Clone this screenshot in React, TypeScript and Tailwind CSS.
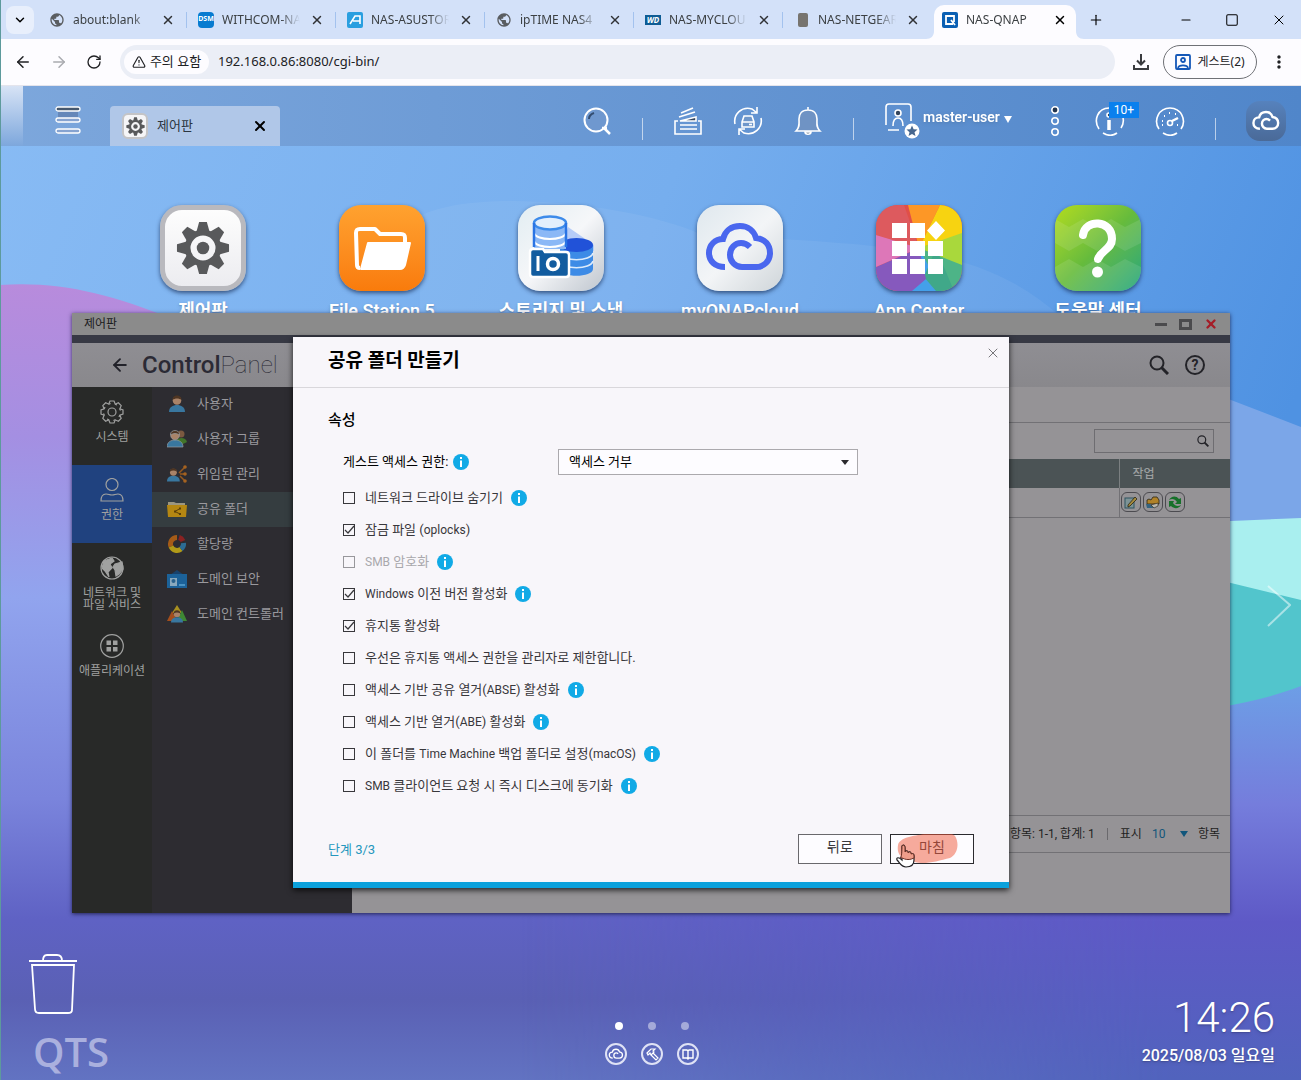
import { useState } from "react";
import type { ReactNode } from "react";
import { ArrowLeft, ArrowRight, ChevronDown, Minus, Plus, RotateCw, Square, TriangleAlert, X } from "lucide-react";
import { MdMoreVert, MdPublic } from "react-icons/md";

const CLOUD =
  "M28 62C18 62 12 56 12 48C12 40 18 34 26 34C28 26 34 21 43 21C51 21 57 26 59 33C68 34 73 40 73 48C73 56 67 62 59 62H45C38 62 33 56 33 50C33 43 38 38 44 38C48 38 50 39 53 42";

const Cloud = ({ className, width }: { className: string; width: number }) => (
  <svg viewBox="6 6 74 74" className={className} fill="none" stroke="currentColor" strokeWidth={width}>
    <path d={CLOUD} />
  </svg>
);

const Gear = ({ className }: { className: string }) => (
  <svg viewBox="-28 -28 56 56" className={className} fill="currentColor">
    {[0, 45, 90, 135, 180, 225, 270, 315].map((a) => (
      <path key={a} d="M-7-16L-4-27H4L7-16Z" transform={`rotate(${a})`} />
    ))}
    <path fillRule="evenodd" d="M0-19a19 19 0 1 0 0 38a19 19 0 1 0 0-38ZM0-13a13 13 0 1 1 0 26a13 13 0 1 1 0-26Z" />
    <circle r="6.500" />
  </svg>
);

/* ---------- browser chrome ---------- */

const browserTabs: { title: string; icon: ReactNode }[] = [
  { title: "about:blank", icon: <MdPublic className="size-4 text-[#5a5d61]" /> },
  {
    title: "WITHCOM-NA",
    icon: <span className="flex size-4 items-center justify-center rounded-sm bg-[#087bd0] text-[7px] font-bold text-white">DSM</span>,
  },
  {
    title: "NAS-ASUSTOR",
    icon: (
      <svg viewBox="0 0 16 16" className="size-4">
        <rect width="16" height="16" rx="2" fill="#2a9fe0" />
        <path d="M3 12L8 4H13V12M6 9H13" fill="none" stroke="#fff" strokeWidth="1.600" />
      </svg>
    ),
  },
  { title: "ipTIME NAS4", icon: <MdPublic className="size-4 text-[#5a5d61]" /> },
  {
    title: "NAS-MYCLOU",
    icon: <span className="flex h-[10px] w-4 items-center justify-center bg-[#0e5c94] text-[8px] font-bold text-white italic">WD</span>,
  },
  { title: "NAS-NETGEAR", icon: <span className="ml-1 h-[14px] w-[10px] rounded-xs bg-[#77746f]" /> },
];

const TabTitle = ({ children }: { children: string }) => (
  <span className="ml-2 w-[78px] shrink-0 mask-r-from-75% text-xs whitespace-nowrap text-[#3c4043]">{children}</span>
);

const BrowserTabs = () => (
  <div className="flex h-[39px] items-center bg-[#d3e1f9] pr-1 font-['Noto_Sans','Noto_Sans_CJK_KR',sans-serif]">
    <button aria-label="Search tabs" className="ml-[6px] flex size-7 shrink-0 items-center justify-center rounded-lg bg-[#e8effc]">
      <ChevronDown className="size-[14px]" strokeWidth={2.5} />
    </button>
    <div className="ml-1 flex min-w-0">
      {browserTabs.map((tab, i) => (
        <div key={tab.title} className="flex w-[149px] items-center pl-[11px]">
          <span className="flex w-4 shrink-0">{tab.icon}</span>
          <TabTitle>{tab.title}</TabTitle>
          <button aria-label={`Close ${tab.title}`} className="ml-[10px]">
            <X className="size-[14px] text-[#303236]" strokeWidth={2.5} />
          </button>
          {i < 5 && <span className="ml-auto h-4 w-px bg-[#a3c2ee]" />}
        </div>
      ))}
    </div>
    <svg viewBox="0 0 8 8" className="-ml-[6px] size-2 shrink-0 self-end" fill="#fdfcff">
      <path d="M8 0V8H0C5 8 8 5 8 0Z" />
    </svg>
    <div className="mt-[5px] flex h-[34px] w-[142px] shrink-0 items-center rounded-t-[10px] bg-[#fdfcff] pb-1 pl-2">
      <svg viewBox="0 0 16 16" className="size-4 shrink-0">
        <rect width="16" height="16" rx="2" fill="#0b60b4" />
        <path d="M11 12H4V4H12V10M9 8L13 13" fill="none" stroke="#fff" strokeWidth="1.800" />
      </svg>
      <TabTitle>NAS-QNAP</TabTitle>
      <button aria-label="Close NAS-QNAP" className="ml-[9px]">
        <X className="size-[14px]" strokeWidth={2.5} />
      </button>
    </div>
    <svg viewBox="0 0 8 8" className="size-2 shrink-0 self-end" fill="#fdfcff">
      <path d="M0 0V8H8C3 8 0 5 0 0Z" />
    </svg>
    <button aria-label="New tab" className="ml-1">
      <Plus className="size-4" strokeWidth={1.75} />
    </button>
    <div className="ml-auto flex items-center gap-8 pr-[10px]">
      <button aria-label="Minimize">
        <Minus className="size-[14px]" strokeWidth={1.75} />
      </button>
      <button aria-label="Maximize">
        <Square className="size-[14px]" strokeWidth={1.75} />
      </button>
      <button aria-label="Close">
        <X className="size-4" strokeWidth={1.5} />
      </button>
    </div>
  </div>
);

const AddressBar = () => (
  <div className="flex h-[47px] items-center border-b border-[#e4e4ec] bg-[#fdfcff] pr-3 pl-[14px] font-['Noto_Sans','Noto_Sans_CJK_KR',sans-serif] text-[#202124]">
    <button aria-label="Back" className="mr-[18px]">
      <ArrowLeft className="size-[18px]" />
    </button>
    <button aria-label="Forward" className="mr-[18px]">
      <ArrowRight className="size-[18px] text-[#a9abb0]" />
    </button>
    <button aria-label="Reload" className="mr-[18px]">
      <RotateCw className="size-4" />
    </button>
    <div className="flex h-[34px] flex-1 items-center rounded-full bg-[#ebeef6] pl-1">
      <button className="flex h-6 w-[85px] shrink-0 items-center justify-center gap-1 rounded-full bg-[#fdfcff] text-[13px]">
        <TriangleAlert className="size-[14px]" />
        주의 요함
      </button>
      <input
        aria-label="Address"
        defaultValue="192.168.0.86:8080/cgi-bin/"
        className="ml-[9px] min-w-0 flex-1 bg-transparent text-[13px] outline-none"
      />
    </div>
    <button aria-label="Downloads" className="mr-3 ml-4">
      <svg viewBox="0 0 20 20" className="size-5" fill="none" stroke="#3a3b3f" strokeWidth="2">
        <path d="M10 2V12M6 8.500L10 12.500L14 8.500M3 13V17H17V13" />
      </svg>
    </button>
    <button className="flex h-[34px] w-[94px] items-center justify-center gap-[6px] rounded-full border border-[#6f7176] text-xs">
      <svg viewBox="0 0 16 16" className="size-4" fill="none" stroke="#1558b8" strokeWidth="1.800">
        <rect x="1" y="1" width="14" height="14" rx="1" />
        <circle cx="8" cy="6" r="2" />
        <path d="M3 14C4 10.500 12 10.500 13 14" />
      </svg>
      게스트(2)
    </button>
    <button aria-label="Menu" className="ml-3">
      <MdMoreVert className="size-5" />
    </button>
  </div>
);

/* ---------- QTS desktop ---------- */

const Wallpaper = () => (
  <svg viewBox="0 0 1301 994" preserveAspectRatio="none" className="absolute inset-0 h-full w-full">
    <defs>
      <linearGradient id="sky" x1="0" y1="0" x2="1" y2="0.300">
        <stop offset="0" stopColor="#88bbf4" />
        <stop offset="0.500" stopColor="#76aeee" />
        <stop offset="1" stopColor="#4f92e2" />
      </linearGradient>
      <linearGradient id="violet" x1="0" y1="190" x2="0" y2="994" gradientUnits="userSpaceOnUse">
        <stop offset="0" stopColor="#b98bdc" />
        <stop offset="0.200" stopColor="#a48fe2" />
        <stop offset="0.400" stopColor="#91a4ee" />
        <stop offset="0.650" stopColor="#7a84dc" />
        <stop offset="0.800" stopColor="#5f62c4" />
        <stop offset="0.900" stopColor="#5a60b4" />
        <stop offset="1" stopColor="#6273c2" />
      </linearGradient>
      <linearGradient id="dusk" x1="0" y1="600" x2="0" y2="994" gradientUnits="userSpaceOnUse">
        <stop offset="0" stopColor="#6d9ee6" />
        <stop offset="0.300" stopColor="#757ddc" />
        <stop offset="0.600" stopColor="#5e59c6" />
        <stop offset="1" stopColor="#5163bd" />
      </linearGradient>
      <linearGradient id="fade" x1="0" y1="0" x2="1" y2="0">
        <stop offset="0.400" stopColor="#fff" stopOpacity="0" />
        <stop offset="0.900" stopColor="#fff" />
      </linearGradient>
      <mask id="right">
        <rect width="1301" height="994" fill="url(#fade)" />
      </mask>
    </defs>
    <rect width="1301" height="994" fill="url(#sky)" />
    <path d="M420 130C480 100 640 120 700 148C900 160 980 160 1060 230H420Z" fill="#fff" opacity=".06" />
    <path d="M0 199C60 195 110 208 170 232L700 600H1301V994H0Z" fill="url(#violet)" />
    <path d="M1100 270L1231 314L1301 341V440H1100Z" fill="#7ba6e8" />
    <path d="M1100 440L1231 435L1301 432V540H1100Z" fill="#a9efef" />
    <path d="M1100 470L1231 497L1301 514V640H1100Z" fill="#52c5cc" />
    <path d="M800 640C1000 640 1200 640 1301 600V994H0V830H800Z" fill="url(#dusk)" mask="url(#right)" />
  </svg>
);

const Divider = () => <span className="mt-4 h-[22px] w-px shrink-0 bg-white/60" />;

const TrayButton = ({ label, children }: { label: string; children: ReactNode }) => (
  <button aria-label={label} className="relative shrink-0">
    <svg viewBox="0 0 30 30" className="size-[30px]" fill="none" stroke="#fff" strokeWidth="1.600">
      {children}
    </svg>
  </button>
);

const Taskbar = () => (
  <header className="relative flex h-[60px] items-center bg-linear-to-r from-[#7da7dc] to-[#5086ca] pr-[15px]">
    <span className="h-full w-[23px] shrink-0 bg-linear-to-b from-[#d7e3f5] to-[#7da7dc]" />
    <button aria-label="Main menu" className="ml-8 pt-2">
      <svg viewBox="0 0 26 28" className="h-7 w-[26px]" fill="#86a3d0" stroke="#fff" strokeWidth="1.300">
        <rect x="3" y="5" width="20" height="8" fill="#6587b9" stroke="none" />
        <rect x="1" y="1" width="24" height="4" rx="2" fill="#46586e" />
        <rect x="1" y="12" width="24" height="4" rx="2" />
        <rect x="1" y="23" width="24" height="4" rx="2" />
      </svg>
    </button>
    <div className="ml-[29px] flex h-10 w-[170px] items-center self-end rounded-t bg-[#b0c7e8] px-3">
      <span className="flex size-[26px] items-center justify-center rounded-md border-2 border-[#c4c4c6] bg-[#f5f5f7]">
        <Gear className="size-[19px] text-[#58595b]" />
      </span>
      <span className="ml-[9px] text-[13px] text-[#2c3640]">제어판</span>
      <button aria-label="제어판 닫기" className="ml-auto">
        <X className="size-4" strokeWidth={3} />
      </button>
    </div>
    <div className="ml-auto flex items-center gap-[30px] pt-[10px]">
      <TrayButton label="검색">
        <circle cx="14" cy="14" r="11.500" strokeWidth="2" fill="#6f98cf" />
        <path d="M20 22H25M22 22L28 28" strokeWidth="2.500" />
        <path d="M7 13C7 10 9 8 12 7" stroke="#334d70" strokeWidth="2" />
      </TrayButton>
      <Divider />
      <TrayButton label="백그라운드 작업">
        <path d="M5 15H2V28H28V15H25M7 19H24M7 23H24" />
        <path d="M7 15L23 11V15Z" fill="#33445c" />
        <path d="M6 11L22 6M8 7L20 2" />
      </TrayButton>
      <TrayButton label="외부 장치">
        <path d="M2 18C0 8 9 0 19 3L24 7M28 12C30 22 21 30 11 27L6 23M24 1V7H18M6 29V23H12" />
        <path d="M9 16L11 10H19L21 16V21H9ZM9 16H21" fill="#6f97ca" />
        <path d="M16 18.500H19" />
      </TrayButton>
      <TrayButton label="알림">
        <path d="M3 25H27C23 21 24 18 24 13C24 8 21 4 15 4C9 4 6 8 6 13C6 18 7 21 3 25ZM15 1V4" fill="#6f93c4" />
        <path d="M12 26C12 29 18 29 18 26Z" fill="#33445c" />
      </TrayButton>
      <Divider />
      <button className="flex w-[131px] shrink-0 items-center text-[14px] font-semibold text-white">
        <svg viewBox="0 0 36 36" className="h-9 w-9" fill="none" stroke="#fff" strokeWidth="1.600">
          <path d="M2 22V4C2 2 3 1 5 1H24C26 1 27 2 27 4V18M4 27H15" />
          <circle cx="14" cy="10" r="3" fill="#33445c" />
          <path d="M9 23C9 17 11 15 14 15C17 15 19 17 19 23" />
          <circle cx="28" cy="28" r="7.500" fill="#fff" stroke="none" />
          <path d="M28 22.500L29.600 26.300L33.500 26.600L30.500 29.200L31.500 33L28 31L24.500 33L25.500 29.200L22.500 26.600L26.400 26.300Z" fill="#47678f" stroke="none" />
        </svg>
        <span className="ml-[3px] pb-2 drop-shadow">master-user</span>
        <svg viewBox="0 0 8 7" className="mb-1 ml-1 h-[7px] w-2" fill="#fff">
          <path d="M0 0H8L4 7Z" />
        </svg>
      </button>
      <button aria-label="더 보기" className="mx-[5px] shrink-0">
        <svg viewBox="0 0 10 30" className="h-[30px] w-[10px]" fill="none" stroke="#fff" strokeWidth="1.600">
          <circle cx="5" cy="4" r="3.200" fill="#22354f" />
          <circle cx="5" cy="15" r="3.200" />
          <circle cx="5" cy="26" r="3.200" />
        </svg>
      </button>
      <div className="relative flex">
        <TrayButton label="정보">
          <path d="M4 23C-2 14 3 2 14 2M8 27C13 30 18 30 22 27M26 22C28 19 29 16 28 12" />
          <circle cx="14" cy="9" r="2" fill="#33445c" />
          <path d="M14 14V24" strokeWidth="3.500" />
        </TrayButton>
        <span className="absolute -top-[4px] left-[14px] h-4 w-[30px] bg-[#0a80ee] text-center text-xs leading-4 text-white">10+</span>
      </div>
      <TrayButton label="리소스 모니터">
        <path d="M4 23C-2 14 4 2 15 2S32 14 26 23M8 27C13 30 18 30 22 27" />
        <path d="M7 15H8M9 10H10M14 7H15M20 8H21M22 19H23M7 19H8" strokeWidth="2" />
        <circle cx="15" cy="17" r="2.500" />
        <path d="M17 15L23 12" strokeWidth="2.500" />
      </TrayButton>
      <Divider />
      <button aria-label="myQNAPcloud" className="flex size-10 shrink-0 items-center justify-center rounded-[14px] bg-linear-to-b from-[#5682bd] to-[#4a6a98] text-white">
        <Cloud className="size-[30px]" width={6} />
      </button>
    </div>
  </header>
);

const tile = "flex size-[86px] items-center justify-center overflow-hidden rounded-[22px] shadow-[0_2px_4px_rgba(20,40,80,0.7)]";

const desktopApps: { name: string; icon: ReactNode }[] = [
  {
    name: "제어판",
    icon: (
      <span className={`${tile} border-[5px] border-[#b9b9be] bg-linear-to-b from-[#fdfdfd] to-[#ececf0]`}>
        <Gear className="size-[54px] text-[#58595b]" />
      </span>
    ),
  },
  {
    name: "File Station 5",
    icon: (
      <span className={`${tile} bg-linear-to-b from-[#ffa22f] to-[#f97b0b]`}>
        <svg viewBox="0 0 86 86" className="size-[86px]" fill="none" stroke="#fff" strokeWidth="4" strokeLinejoin="round">
          <path d="M21 63C19 63 18 62 18 60L17 28C17 25 18 24 21 24H36L41 29H62C65 29 66 30 66 33V37" />
          <path d="M29 38H71L66 60C65 63 64 64 61 64H22Z" fill="#fff" strokeWidth="2" />
        </svg>
      </span>
    ),
  },
  {
    name: "스토리지 및 스냅",
    icon: (
      <span className={`${tile} bg-linear-to-br from-[#e2edf2] via-[#f6f7f9] to-[#bfc6ce]`}>
        <svg viewBox="0 0 86 86" className="size-[86px]">
          <path d="M50 22L76 40V46H42Z" fill="#b6ccf8" />
          <path d="M42 40V64C42 73 75 73 75 64V40Z" fill="#3d8be6" />
          <ellipse cx="58.500" cy="40" rx="16.500" ry="7" fill="#2152d8" />
          <path d="M42 48C44 57 73 57 75 48M42 56C44 65 73 65 75 56" fill="none" stroke="#dcebfb" strokeWidth="1.600" />
          <path d="M16 18V44H48V18Z" fill="#8bb8f6" />
          <path d="M16 28C18 36 46 36 48 28M16 36C18 44 46 44 48 36" fill="none" stroke="#fff" strokeWidth="2" />
          <ellipse cx="32" cy="18" rx="16" ry="6.500" fill="#e3effc" stroke="#3d8bea" strokeWidth="2.500" />
          <path d="M16 18V42M48 18V42" stroke="#2a74e4" strokeWidth="2.500" />
          <path d="M12 47C12 45 13 44 15 44H25L27 47H48C50 47 51 48 51 50V69C51 71 50 72 48 72H15C13 72 12 71 12 69Z" fill="#125c9f" stroke="#fff" strokeWidth="2.500" />
          <path d="M20 51V66" stroke="#fff" strokeWidth="3" />
          <circle cx="35" cy="59" r="5.500" fill="none" stroke="#fff" strokeWidth="3.500" />
        </svg>
      </span>
    ),
  },
  {
    name: "myQNAPcloud",
    icon: (
      <span className={`${tile} bg-linear-to-br from-[#dfe8ee] via-[#f3f5f7] to-[#cfd5d9] text-[#4a67ee]`}>
        <Cloud className="size-[74px]" width={6} />
      </span>
    ),
  },
  {
    name: "App Center",
    icon: (
      <span className={tile}>
        <svg viewBox="0 0 86 86" className="size-[86px]">
          <rect width="86" height="86" fill="#e04f48" />
          <path d="M0 0H28L43 43L0 30Z" fill="#dd5a5e" />
          <path d="M32 0H64L43 43Z" fill="#fd9726" />
          <path d="M64 0H86V30L43 43Z" fill="#f7d311" />
          <path d="M86 28V62L43 43Z" fill="#a9d83c" />
          <path d="M86 60V86H60L43 43Z" fill="#4db487" />
          <path d="M66 86H34L43 43Z" fill="#44a0ea" />
          <path d="M48 72L60 86H78L60 43Z" fill="#40a889" />
          <path d="M0 62L43 43L50 74L36 86H0Z" fill="#8659bd" />
          <path d="M0 30L43 43L0 62Z" fill="#dd77b8" />
          <path
            d="M16 18h15v15H16zM34 18h15v15H34zM16 36h15v15H16zM34 36h15v15H34zM52 36h15v15H52zM16 54h15v15H16zM34 54h15v15H34zM52 54h15v15H52zM60 16L69 25.500L60 35L51 25.500Z"
            fill="#fff"
          />
        </svg>
      </span>
    ),
  },
  {
    name: "도움말 센터",
    icon: (
      <span className={`${tile} bg-linear-to-br from-[#b2dc18] via-[#66bb3c] to-[#1ba67a]`}>
        <svg viewBox="0 0 86 86" className="size-[86px]">
          <path d="M0 14L14 22L28 14L42 22L56 14L70 22L86 14V38L70 46L56 38L42 46L28 38L14 46L0 38Z" fill="#fff" opacity=".1" />
          <path d="M0 62L14 54L28 62L42 54L56 62L70 54L86 62V86H0Z" fill="#fff" opacity=".1" />
          <path d="M28 30C30 14 57 14 57 34C57 44 46 45 43 54" fill="none" stroke="#fff" strokeWidth="8" strokeLinecap="round" />
          <circle cx="42.500" cy="67" r="5.500" fill="#fff" />
        </svg>
      </span>
    ),
  },
];

const DesktopIcons = () => (
  <div className="relative mx-auto grid w-full max-w-[1074px] grid-cols-6 pt-[59px]">
    {desktopApps.map((app) => (
      <button key={app.name} className="flex flex-col items-center gap-[6px] text-lg font-semibold whitespace-nowrap text-white">
        {app.icon}
        <span className="text-shadow-md">{app.name}</span>
      </button>
    ))}
  </div>
);

const sections: { name: string; icon: ReactNode }[] = [
  {
    name: "시스템",
    icon: (
      <>
        {[0, 45, 90, 135, 180, 225, 270, 315].map((a) => (
          <path key={a} d="M8.700 4.300L10 1H14L15.300 4.300L17 5" transform={`rotate(${a} 12 12)`} />
        ))}
        <circle cx="12" cy="12" r="4" />
      </>
    ),
  },
  {
    name: "권한",
    icon: (
      <>
        <circle cx="12" cy="6.500" r="6" />
        <path d="M1 23C1 18 3 16 6 16C9 16 9 17 12 17C15 17 15 16 18 16C21 16 23 18 23 23Z" />
      </>
    ),
  },
  {
    name: "네트워크 및 파일 서비스",
    icon: (
      <>
        <circle cx="12" cy="12" r="11" />
        <path d="M4 5L12 2L14 5L10 8L12 12L8 16L9 21L5 15L2 12ZM15 8L22 6L23 13L19 18L16 20L15 14L13 11Z" fill="currentColor" />
      </>
    ),
  },
  {
    name: "애플리케이션",
    icon: (
      <>
        <circle cx="12" cy="12" r="11.300" />
        <path d="M6.500 6.500h4.500v4.500H6.500zM13 6.500h4.500v4.500H13zM6.500 13h4.500v4.500H6.500zM13 13h4.500v4.500H13z" fill="currentColor" stroke="none" />
      </>
    ),
  },
];

const Person = ({ x = 0 }: { x?: number }) => (
  <g transform={`translate(${x} 0)`}>
    <path d="M0 18C0 13 4 11 8 11S16 13 16 18Z" fill="#39779f" />
    <circle cx="8" cy="6.500" r="4.300" fill="#a98368" />
    <path d="M3.500 6C3 0 13 0 12.500 6C10 4 6 4 3.500 6Z" fill="#4e3522" />
  </g>
);

const menuItems: { name: string; icon: ReactNode }[] = [
  { name: "사용자", icon: <Person x={2} /> },
  {
    name: "사용자 그룹",
    icon: (
      <>
        <path d="M9 12C11 8 19 8 20 13L16 15Z" fill="#42752a" />
        <circle cx="14" cy="5" r="3.500" fill="#7b5940" />
        <g stroke="#969ca0" strokeWidth=".7">
          <Person />
        </g>
      </>
    ),
  },
  {
    name: "위임된 관리",
    icon: (
      <>
        <g transform="translate(0 3) scale(.800)">
          <Person />
        </g>
        <path d="M12 9L18 3M13 10H18M13 12L18 17" stroke="#96591e" strokeWidth="1.500" />
        <circle cx="18" cy="3" r="1.800" fill="#a56220" />
        <circle cx="18" cy="10" r="1.800" fill="#a56220" />
        <circle cx="18" cy="17" r="1.800" fill="#a56220" />
      </>
    ),
  },
  {
    name: "공유 폴더",
    icon: (
      <>
        <path d="M1 3H7L9 4H18V9H1Z" fill="#9c9680" />
        <path d="M0 6H20L19 18H1Z" fill="#b58712" />
        <path d="M13 9.500L8 12.500L13 15" stroke="#5b3f08" fill="none" />
        <path d="M12 8.500h2v2h-2zM7 11.500h2v2H7zM12 14h2v2h-2z" fill="#5b3f08" />
      </>
    ),
  },
  {
    name: "할당량",
    icon: (
      <g fill="none" strokeWidth="5">
        <path d="M10 3.500A6.500 6.500 0 0 0 4 12.500" stroke="#a55b17" />
        <path d="M4 12.500A6.500 6.500 0 0 0 14 15" stroke="#b19a18" />
        <path d="M14 15A6.500 6.500 0 0 0 16.500 9" stroke="#2c6c94" />
        <path d="M16 7A6.500 6.500 0 0 0 12 3.500" stroke="#8b2222" />
      </g>
    ),
  },
  {
    name: "도메인 보안",
    icon: (
      <>
        <path d="M3 6L10 1L17 6" fill="#19426b" />
        <rect y="5" width="20" height="14" fill="#1c6299" />
        <rect x="3" y="9" width="7" height="8" fill="#8aa9bd" />
        <circle cx="6.500" cy="12" r="2" fill="#2a628c" />
        <path d="M12 16H18" stroke="#4b93c2" strokeWidth="2" />
      </>
    ),
  },
  {
    name: "도메인 컨트롤러",
    icon: (
      <>
        <path d="M10 1L15 9H5Z" fill="#a89020" />
        <path d="M5 7L10 17H0Z" fill="#a34e1c" />
        <path d="M15 6L20 17H10Z" fill="#3e8834" />
        <g transform="translate(4 5) scale(.750)">
          <Person />
        </g>
      </>
    ),
  },
];

const SearchGlyph = ({ className }: { className: string }) => (
  <svg viewBox="0 0 20 20" className={className} fill="none" stroke="#232328" strokeWidth="2">
    <circle cx="8" cy="8" r="6.500" />
    <path d="M12.500 12.500L19 19" strokeWidth="3" />
  </svg>
);

const rowAction = "flex size-5 items-center justify-center rounded-md border border-[#4c4b50]";

const SharedFolders = () => (
  <section className="flex min-w-0 flex-1 flex-col bg-[#959396] text-xs text-[#1f1f22]">
    <div className="h-9 border-b border-[#727175]" />
    <div className="flex h-9 items-center justify-end pr-4">
      <label className="flex h-6 w-[120px] items-center border border-[#6e6d71] pr-1">
        <input aria-label="공유 폴더 검색" className="min-w-0 flex-1 bg-transparent px-1 outline-none" />
        <SearchGlyph className="size-3" />
      </label>
    </div>
    <table className="w-full table-fixed border-collapse text-left">
      <thead>
        <tr className="h-[29px] bg-[#4b5355] text-[#9c9fa0]">
          <th aria-label="폴더 이름" />
          <th className="w-[111px] border-l border-[#7b7f81] pl-[13px] font-medium">작업</th>
        </tr>
      </thead>
      <tbody>
        <tr className="h-[29px] border-b border-[#727175]">
          <td />
          <td className="border-l border-[#727175] pl-[1px]">
            <div className="flex gap-[2px]">
              <button aria-label="속성 편집" className={rowAction}>
                <svg viewBox="0 0 14 14" className="size-[14px]">
                  <rect x="1" y="3" width="9" height="10" fill="#7d9396" stroke="#2f5560" />
                  <path d="M4 10L11 2L13 4L6 11L4 12Z" fill="#a48a3c" stroke="#2a2414" strokeWidth=".8" />
                </svg>
              </button>
              <button aria-label="권한 편집" className={rowAction}>
                <svg viewBox="0 0 14 14" className="size-[14px]">
                  <path d="M1 5L3 4L5 5L7 2H11L13 5V9H1Z" fill="#b08228" stroke="#2a2414" strokeWidth=".8" />
                  <path d="M0 9H4L9 13H1Z" fill="#35627d" />
                  <path d="M5 10L12 8V11L8 13Z" fill="#b9b7ae" stroke="#2a2414" strokeWidth=".6" />
                </svg>
              </button>
              <button aria-label="새로 고침" className={rowAction}>
                <svg viewBox="0 0 14 14" className="size-[14px]" fill="#17702a">
                  <path d="M1 5C3 1 8 0 11 4L13 3V9H7L9 7C7 4 4 3 1 5Z" />
                  <path d="M13 10C11 14 6 14 3 11L1 12V6H6L5 8C7 11 10 12 13 10Z" />
                </svg>
              </button>
            </div>
          </td>
        </tr>
      </tbody>
    </table>
    <div className="mt-auto mb-[60px] flex h-[38px] items-center justify-end border-y border-[#727175] pr-[10px]">
      <span>항목: 1-1, 합계: 1</span>
      <span className="mx-3 h-3 w-px bg-[#6a696d]" />
      <label htmlFor="page-size">표시</label>
      <span className="ml-[10px] flex items-center text-[#11567b]">
        <select id="page-size" className="w-7 appearance-none bg-transparent outline-none">
          <option>10</option>
        </select>
        <svg viewBox="0 0 8 6" className="h-[6px] w-2" fill="currentColor">
          <path d="M0 0H8L4 6Z" />
        </svg>
      </span>
      <span className="ml-[10px]">항목</span>
    </div>
  </section>
);

/* ---------- create folder dialog ---------- */

const InfoDot = () => (
  <svg viewBox="0 0 16 16" className="size-4 shrink-0">
    <circle cx="8" cy="8" r="8" fill="#11aae6" />
    <path d="M7 3H9V5H7ZM7 6.500H9V13H7Z" fill="#fff" />
  </svg>
);

type Option = { label: string; checked?: boolean; disabled?: boolean; info?: boolean };

const folderOptions: Option[] = [
  { label: "네트워크 드라이브 숨기기", info: true },
  { label: "잠금 파일 (oplocks)", checked: true },
  { label: "SMB 암호화", disabled: true, info: true },
  { label: "Windows 이전 버전 활성화", checked: true, info: true },
  { label: "휴지통 활성화", checked: true },
  { label: "우선은 휴지통 액세스 권한을 관리자로 제한합니다." },
  { label: "액세스 기반 공유 열거(ABSE) 활성화", info: true },
  { label: "액세스 기반 열거(ABE) 활성화", info: true },
  { label: "이 폴더를 Time Machine 백업 폴더로 설정(macOS)", info: true },
  { label: "SMB 클라이언트 요청 시 즉시 디스크에 동기화", info: true },
];

// Latin words are set one step smaller than the Hangul around them
const MixedText = ({ text }: { text: string }) => (
  <span>
    {text.split(/([A-Za-z][A-Za-z ]*[A-Za-z])/).map((part, i) =>
      i % 2 ? (
        <span key={i} className="text-xs">
          {part}
        </span>
      ) : (
        part
      )
    )}
  </span>
);

const OptionRow = ({ option }: { option: Option }) => {
  const [checked, setChecked] = useState(!!option.checked);

  return (
    <li className="flex h-8 items-center gap-2">
      <label className={option.disabled ? "flex items-center gap-[10px] text-[#a9a8ac]" : "flex items-center gap-[10px]"}>
        <span className="grid">
          <input
            type="checkbox"
            checked={checked}
            disabled={option.disabled}
            onChange={(e) => setChecked(e.target.checked)}
            className="peer size-3 appearance-none border border-[#38373b] [grid-area:1/1] disabled:border-[#98979b]"
          />
          <svg
            viewBox="0 0 12 12"
            className="pointer-events-none size-3 opacity-0 [grid-area:1/1] peer-checked:opacity-100"
            fill="none"
            stroke="#38373b"
            strokeWidth="1.200"
          >
            <path d="M2 6L5 9L11 2" />
          </svg>
        </span>
        <MixedText text={option.label} />
      </label>
      {option.info && <InfoDot />}
    </li>
  );
};

const dialogButton = "h-[30px] w-[84px] border bg-[#fdfcff] pb-1 text-sm text-[#38373b]";

const CreateFolderDialog = () => (
  <div role="dialog" aria-label="공유 폴더 만들기" className="flex w-[716px] flex-col border-b-[6px] border-[#0ba1dc] bg-[#f8f6fa] shadow-[0_2px_6px_rgba(0,0,0,0.8)]">
    <div className="flex h-[51px] items-center justify-between border-b border-[#d9d7db] pr-2 pb-[2px] pl-[35px]">
      <h2 className="text-[19px] font-bold">공유 폴더 만들기</h2>
      <button aria-label="닫기" className="mb-4">
        <X className="size-4 text-[#77767a]" strokeWidth={1.5} />
      </button>
    </div>
    <div className="px-[35px] pt-[22px] text-[13px] text-[#38373b]">
      <h3 className="text-[15px] leading-5 font-medium text-black">속성</h3>
      <div className="mt-[19px] ml-[15px] flex h-[26px] items-center text-black">
        <label htmlFor="guest-access">게스트 액세스 권한:</label>
        <span className="ml-[5px]">
          <InfoDot />
        </span>
        <span className="mr-[116px] ml-auto flex w-[300px] items-center border border-[#aba9ad] bg-[#fdfcff] pr-2">
          <select id="guest-access" className="h-6 flex-1 appearance-none bg-transparent pl-[10px] outline-none">
            <option>액세스 거부</option>
            <option>읽기 전용</option>
            <option>읽기/쓰기</option>
          </select>
          <svg viewBox="0 0 8 5" className="h-[5px] w-2" fill="#2b2a2e">
            <path d="M0 0H8L4 5Z" />
          </svg>
        </span>
      </div>
      <ul className="mt-[7px] ml-[15px]">
        {folderOptions.map((option) => (
          <OptionRow key={option.label} option={option} />
        ))}
      </ul>
    </div>
    <div className="mt-8 flex items-center px-[35px] pb-[18px]">
      <span className="pt-[2px] text-[13px] text-[#2596bd]">단계 3/3</span>
      <button className={`${dialogButton} ml-auto border-[#69686c]`}>뒤로</button>
      <div className="relative ml-2">
        <button className={`${dialogButton} border-[#2b2a2e]`}>마침</button>
        <svg viewBox="0 0 84 36" className="pointer-events-none absolute top-0 left-0 h-9 w-[84px]">
          <path d="M8 11C10 3 24 2 34 0C48-1 60-3 65 2C70 10 67 21 60 24C48 27 34 31 25 28C16 25 6 24 8 11Z" fill="#f0583a" opacity=".5" />
          <path
            d="M12 12C14 10 15 12 15 14V18C17 16 18 17 18 19C20 17 21 18 21 20C23 19 24 20 24 22V26C24 31 21 33 16 33C11 33 10 29 7 26C6 23 9 23 12 26Z"
            fill="#fff"
            stroke="#1f1f22"
            strokeWidth="1.200"
          />
          <path d="M10 23C12 26 12 12 12 12C14 10 15 12 15 14V18C17 16 18 17 18 19C20 17 21 18 21 20C23 19 24 20 24 22V24C18 27 14 25 10 23Z" fill="#ef9d8a" stroke="#6b2d22" />
        </svg>
      </div>
    </div>
  </div>
);

const ControlPanelWindow = () => (
  <main className="absolute top-[227px] right-[71px] left-[72px] flex h-[600px] flex-col shadow-[0_1px_4px_rgba(20,20,60,0.8)]">
    <div className="flex h-[22px] items-center bg-[#8b8b8b] pr-3 pl-3 text-xs text-[#1b1b1d]">
      <span>제어판</span>
      <div className="ml-auto flex items-center gap-3 text-[#3b3b3d]">
        <button aria-label="최소화" className="h-[3px] w-3 bg-[#4b4b4d]" />
        <button aria-label="최대화" className="h-[11px] w-[13px] border-3 border-[#4b4b4d]" />
        <button aria-label="닫기">
          <X className="size-[14px] text-[#a51d27]" strokeWidth={4} />
        </button>
      </div>
    </div>
    <div className="h-2 bg-[#373944]" />
    <div className="flex h-11 items-center bg-linear-to-b from-[#8f8e93] to-[#89888c] pr-[25px] pl-[38px]">
      <button aria-label="뒤로">
        <ArrowLeft className="size-5 text-[#22222a]" strokeWidth={2.25} />
      </button>
      <h1 className="ml-3 text-2xl font-medium text-[#2b2a35]">
        Control<span className="font-thin">Panel</span>
      </h1>
      <button aria-label="검색" className="ml-auto">
        <SearchGlyph className="size-5" />
      </button>
      <button aria-label="도움말" className="ml-4 size-5 rounded-full border-2 border-[#232328] text-sm leading-4 font-bold text-[#232328]">
        ?
      </button>
    </div>
    <div className="flex flex-1">
      <nav className="w-20 bg-[#282928] text-xs text-[#a0a1a0]">
        {sections.map((s) => (
          <a
            key={s.name}
            href="#"
            className={
              s.name === "권한"
                ? "flex h-[78px] flex-col items-center bg-[#20427f] px-1 pt-[13px] text-center leading-3 break-keep"
                : "flex h-[78px] flex-col items-center px-1 pt-[13px] text-center leading-3 break-keep"
            }
          >
            <svg viewBox="0 0 24 24" className="mb-[7px] size-6 shrink-0" fill="none" stroke="currentColor" strokeWidth="1.200">
              {s.icon}
            </svg>
            <span className="w-[74px]">{s.name}</span>
          </a>
        ))}
      </nav>
      <nav className="w-[200px] bg-[#2d2c31] text-[13px] text-[#9a999e]">
        {menuItems.map((item) => (
          <a
            key={item.name}
            href="#"
            className={
              item.name === "공유 폴더"
                ? "flex h-[35px] items-center gap-[10px] bg-[#353d40] pb-[2px] pl-[15px]"
                : "flex h-[35px] items-center gap-[10px] pb-[2px] pl-[15px]"
            }
          >
            <svg viewBox="0 0 20 20" className="size-5">
              {item.icon}
            </svg>
            {item.name}
          </a>
        ))}
      </nav>
      <SharedFolders />
    </div>
    <div className="absolute inset-0 flex items-start justify-center pt-6">
      <CreateFolderDialog />
    </div>
  </main>
);

const DesktopFooter = () => (
  <footer className="relative mt-auto grid grid-cols-3 items-end pr-[26px] pb-2 pl-[29px] text-white">
    <div>
      <svg viewBox="0 0 48 60" className="h-[60px] w-12" fill="none" stroke="#fff" strokeWidth="1.800">
        <path d="M0 7H48M14 7C14 3 15 1 18 1H28C31 1 33 3 33 7M3 11H45L43 56C43 58 41 59 39 59H10C7 59 6 58 6 55Z" />
      </svg>
      <p className="mt-[18px] pl-1 font-['Open_Sans',sans-serif] text-[40px] leading-10 font-semibold text-[#aab0de]">QTS</p>
    </div>
    <div className="flex flex-col items-center gap-[13px] pb-[7px]">
      <div className="flex gap-[25px]">
        <button aria-label="페이지 1" className="size-2 rounded-full bg-white" />
        <button aria-label="페이지 2" className="size-2 rounded-full bg-white/45" />
        <button aria-label="페이지 3" className="size-2 rounded-full bg-white/45" />
      </div>
      <div className="flex gap-[14px]">
        <a href="#" aria-label="myQNAPcloud" className="flex size-[22px] items-center justify-center rounded-full border-2 border-[#dfe2f5]">
          <Cloud className="size-4" width={6} />
        </a>
        <a href="#" aria-label="유틸리티" className="flex size-[22px] items-center justify-center rounded-full border-2 border-[#dfe2f5]">
          <svg viewBox="0 0 14 14" className="size-[14px]" fill="none" stroke="#fff" strokeWidth="1.200">
            <path d="M2 6L6 2L10 2L8 4L9 5L6 8L5 6L3 8ZM8 6L13 11L11 13L6 8" />
          </svg>
        </a>
        <a href="#" aria-label="피드백" className="flex size-[22px] items-center justify-center rounded-full border-2 border-[#dfe2f5]">
          <svg viewBox="0 0 14 14" className="size-[14px]" fill="none" stroke="#fff" strokeWidth="1.400">
            <path d="M2 3H6L7 4L8 3H12V11H8L7 12L6 11H2ZM7 4V11" />
          </svg>
        </a>
      </div>
    </div>
    <div className="pb-1 text-right text-shadow-md">
      <p className="text-[42px] leading-[52px] font-light">14:26</p>
      <p className="text-base leading-6 font-medium">2025/08/03 일요일</p>
    </div>
  </footer>
);

export default function App() {
  return (
    <div className="relative flex min-h-screen flex-col font-[Roboto,'Noto_Sans_CJK_KR',sans-serif] before:absolute before:inset-y-0 before:left-0 before:z-10 before:w-px before:bg-[#5d9a9c]">
      <BrowserTabs />
      <AddressBar />
      <div className="relative flex flex-1 flex-col overflow-hidden">
        <Wallpaper />
        <Taskbar />
        <DesktopIcons />
        <ControlPanelWindow />
        <button aria-label="다음 페이지" className="absolute top-[499px] right-[10px]">
          <svg viewBox="0 0 24 42" className="h-[42px] w-6" fill="none" stroke="#fff" strokeWidth="2" opacity=".5">
            <path d="M1 1L23 20L1 41" />
          </svg>
        </button>
        <DesktopFooter />
      </div>
    </div>
  );
}
